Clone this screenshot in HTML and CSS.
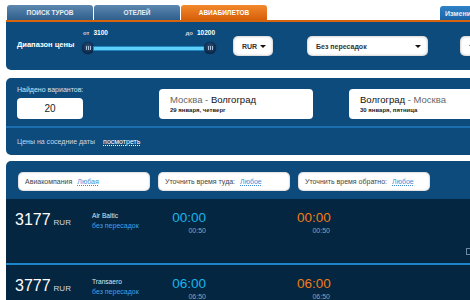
FILE: index.html
```html
<!DOCTYPE html>
<html lang="ru">
<head>
    <meta charset="UTF-8">
    <title>Авиабилеты</title>
    <link rel="stylesheet" href="styles.css">
</head>
<body>
    <div class="page">
        <div class="tabs">
            <div class="tab">Поиск туров</div>
            <div class="tab">Отелей</div>
            <div class="tab tab-active">Авиабилетов</div>
            <div class="tab tab-edit">Изменить</div>
        </div>

        <div class="panel-search">
            <div class="price-label">Диапазон цены</div>
            <div class="range">
                <div class="range-values">
                    <span><small>от</small>3100</span>
                    <span><small>до</small>10200</span>
                </div>
                <div class="range-track">
                    <span class="knob"></span>
                    <span class="bar"></span>
                    <span class="knob"></span>
                </div>
            </div>
            <div class="select select-cur">RUR</div>
            <div class="select select-stops">Без пересадок</div>
            <div class="select select-more"></div>
        </div>

        <div class="panel-info">
            <div class="info-top">
                <div class="found">
                    <div class="found-label">Найдено вариантов:</div>
                    <div class="found-count">20</div>
                </div>
                <div class="route route-first">
                    <div class="route-title">Москва - <b>Волгоград</b></div>
                    <div class="route-date">29 января, четверг</div>
                </div>
                <div class="route route-second">
                    <div class="route-title"><b>Волгоград</b> - Москва</div>
                    <div class="route-date">30 января, пятница</div>
                </div>
            </div>
            <div class="info-bottom">
                Цены на соседние даты<a href="#">посмотреть</a>
            </div>
        </div>

        <div class="panel-results">
            <div class="filters">
                <div class="filter">Авиакомпания<a href="#">Любая</a></div>
                <div class="filter">Уточнить время туда:<a href="#">Любое</a></div>
                <div class="filter">Уточнить время обратно:<a href="#">Любое</a></div>
            </div>
            <div class="results">
                <div class="flight">
                    <div class="price"><span class="price-value">3177</span><span class="price-cur">RUR</span></div>
                    <div class="airline">
                        <div class="airline-name">Air Baltic</div>
                        <div class="airline-stops">без пересадок</div>
                    </div>
                    <div class="time">
                        <div class="time-big">00:00</div>
                        <div class="time-small">00:50</div>
                    </div>
                    <div class="time time-back">
                        <div class="time-big">00:00</div>
                        <div class="time-small">00:50</div>
                    </div>
                    <span class="flight-icon"></span>
                </div>
                <div class="flight">
                    <div class="price"><span class="price-value">3777</span><span class="price-cur">RUR</span></div>
                    <div class="airline">
                        <div class="airline-name">Transaero</div>
                        <div class="airline-stops">без пересадок</div>
                    </div>
                    <div class="time">
                        <div class="time-big">06:00</div>
                        <div class="time-small">06:50</div>
                    </div>
                    <div class="time time-back">
                        <div class="time-big">06:00</div>
                        <div class="time-small">06:50</div>
                    </div>
                </div>
            </div>
        </div>
    </div>
</body>
</html>
```

FILE: styles.css
```css
body {
    margin: 0;
    background: #fff;
    font-family: "Liberation Sans", Arial, sans-serif;
    overflow: hidden;
}

.page {
    width: 560px;
    padding: 5px 0 0 6px;
}

/* tabs */
.tabs {
    display: flex;
    height: 15px;
}

.tab {
    width: 86px;
    margin-left: 1px;
    border-radius: 3px 3px 0 0;
    background: linear-gradient(#5c87b0, #2f5f8c);
    color: #e6edf4;
    font-size: 6.5px;
    font-weight: bold;
    text-transform: uppercase;
    display: flex;
    align-items: center;
    justify-content: center;
}

.tab-active {
    background: linear-gradient(#f3892b, #d65f0a);
    color: #fff;
}

.tab-edit {
    align-self: flex-end;
    width: 60px;
    height: 14px;
    margin-left: 173px;
    padding-left: 5px;
    justify-content: flex-start;
    text-transform: none;
    font-size: 7px;
    background: linear-gradient(#2f82c8, #1a63a5);
}

/* search panel */
.panel-search {
    height: 48px;
    border-top: 2px solid #d6640e;
    background: #0e4b7d;
    border-radius: 0 0 5px 5px;
    display: flex;
    align-items: flex-start;
}

.price-label {
    width: 65px;
    margin: 17px 0 0 11px;
    font-size: 7.5px;
    font-weight: bold;
    line-height: 12px;
    color: #fff;
    white-space: nowrap;
}

.range {
    width: 134px;
    margin-top: 6px;
}

.range-values {
    display: flex;
    justify-content: space-between;
    padding: 0 1px;
    font-size: 6.5px;
    font-weight: bold;
    line-height: 10px;
    color: #fff;
}

.range-values small {
    font-size: 6px;
    color: #c8d6e4;
    margin-right: 4px;
}

.range-track {
    display: flex;
    align-items: center;
    margin-top: 4px;
}

.knob {
    flex: none;
    width: 12px;
    height: 12px;
    border-radius: 50%;
    background:
        repeating-linear-gradient(90deg, #a9bfd8 0 1px, transparent 1px 2px) center / 5px 4px no-repeat,
        radial-gradient(circle at 50% 40%, #2e5683, #0b2443 70%);
    box-shadow: 0 0 1px #000;
}

.bar {
    flex: 1;
    height: 3px;
    background: #5fd0f7;
    box-shadow: 0 0 0 1px #1f86c0;
}

.select {
    box-sizing: border-box;
    height: 20px;
    margin-top: 14px;
    padding: 0 7px 0 9px;
    border-radius: 5px;
    background: #fff;
    box-shadow: inset 0 0 3px rgba(0, 0, 0, 0.35);
    display: flex;
    align-items: center;
    justify-content: space-between;
    font-size: 7px;
    font-weight: bold;
    color: #333;
}

.select::after {
    content: "";
    border-left: 3px solid transparent;
    border-right: 3px solid transparent;
    border-top: 3px solid #111;
}

.select-cur {
    width: 40px;
    margin-left: 17px;
}

.select-stops {
    width: 121px;
    margin-left: 34px;
}

.select-more {
    width: 60px;
    margin-left: 32px;
}

/* info panel */
.panel-info {
    margin-top: 8px;
    background: #0e4b7d;
    border-radius: 5px;
}

.info-top {
    height: 48px;
    padding-left: 11px;
    border-bottom: 2px solid #1c6fae;
    display: flex;
    align-items: flex-start;
}

.found {
    width: 66px;
    margin-top: 6px;
}

.found-label {
    font-size: 7px;
    line-height: 12px;
    color: #d5e1ec;
    white-space: nowrap;
}

.found-count {
    height: 21px;
    margin-top: 2px;
    border-radius: 4px;
    background: #fff;
    display: flex;
    align-items: center;
    justify-content: center;
    font-size: 10px;
    color: #222;
}

.route {
    box-sizing: border-box;
    width: 154px;
    height: 30px;
    margin-top: 11px;
    padding-left: 11px;
    border-radius: 4px;
    background: #fff;
    display: flex;
    flex-direction: column;
    justify-content: center;
}

.route-first {
    margin-left: 76px;
}

.route-second {
    margin-left: 36px;
}

.route-title {
    font-size: 9.5px;
    line-height: 11px;
    color: #666;
}

.route-title b {
    font-weight: normal;
    color: #111;
}

.route-date {
    margin-top: 1px;
    font-size: 6px;
    font-weight: bold;
    line-height: 9px;
    color: #222;
}

.info-bottom {
    height: 27px;
    padding-left: 11px;
    display: flex;
    align-items: center;
    font-size: 7px;
    color: #c9d7e5;
}

.info-bottom a {
    margin-left: 8px;
    color: #fff;
    text-decoration: underline dotted;
}

/* results */
.panel-results {
    margin-top: 6px;
}

.filters {
    height: 38px;
    padding: 11px 0 0 12px;
    box-sizing: border-box;
    border-radius: 5px 5px 0 0;
    background: #0e4b7d;
    display: flex;
    align-items: flex-start;
    gap: 8px;
}

.filter {
    width: 132px;
    height: 19px;
    box-sizing: border-box;
    padding-left: 7px;
    border-radius: 5px;
    background: #fff;
    box-shadow: inset 0 0 2px rgba(0, 0, 0, 0.4);
    display: flex;
    align-items: center;
    font-size: 7px;
    color: #444;
}

.filter a {
    margin-left: 5px;
    color: #3b8ed6;
    text-decoration: underline dotted;
}

.results {
    background: #052640;
}

.flight {
    position: relative;
    box-sizing: border-box;
    height: 64px;
    padding-top: 11px;
    display: flex;
    align-items: flex-start;
}

.flight + .flight {
    border-top: 2px solid #1b86c9;
}

.price {
    box-sizing: border-box;
    width: 86px;
    padding-left: 9px;
    line-height: 20px;
    white-space: nowrap;
}

.price-value {
    font-size: 16px;
    color: #fff;
}

.price-cur {
    margin-left: 3px;
    font-size: 8px;
    color: #d0dbe6;
}

.airline {
    width: 80px;
    margin-top: 1px;
    font-size: 6.6px;
    line-height: 10px;
}

.airline-name {
    color: #dde6ee;
}

.airline-stops {
    font-size: 7px;
    color: #3fa3e4;
}

.time {
    width: 34px;
    text-align: right;
}

.time-big {
    font-size: 13.5px;
    line-height: 16px;
    color: #19b5ea;
}

.time-small {
    font-size: 7px;
    line-height: 10px;
    color: #8fa3b6;
}

.time-back {
    width: 33px;
    margin-left: 91px;
}

.time-back .time-big {
    color: #f07c17;
}

.flight-icon {
    position: absolute;
    left: 460px;
    top: 49px;
    width: 5px;
    height: 5px;
    border: 1px solid #6d89a6;
}
```
